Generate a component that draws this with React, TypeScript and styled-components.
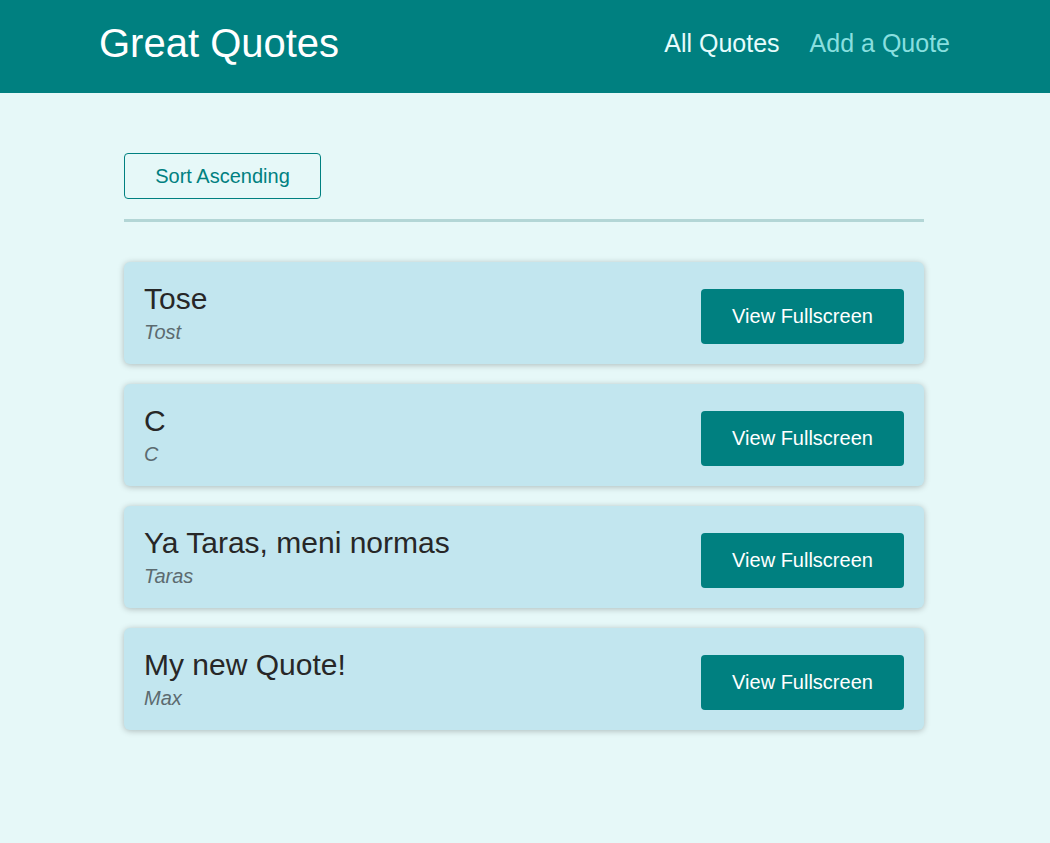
import React from "react";
import styled, { createGlobalStyle } from "styled-components";

const Global = createGlobalStyle`
  * { box-sizing: border-box; }
  html, body { margin: 0; padding: 0; }
  body {
    background: #e6f8f8;
    font-family: "Liberation Sans", Arial, sans-serif;
  }
`;

const Header = styled.header`
  height: 93px;
  background: #008080;
  display: flex;
  align-items: center;
  justify-content: space-between;
  padding: 0 100px 6px 99px;
`;

const Logo = styled.div`
  color: #ffffff;
  font-size: 40px;
`;

const NavList = styled.ul`
  display: flex;
  list-style: none;
  margin: 0;
  padding: 0;
  gap: 30px;
`;

const NavLink = styled.a<{ $active?: boolean }>`
  font-size: 25px;
  text-decoration: none;
  color: ${(p) => (p.$active ? "#e6fcfc" : "#88dfdf")};
`;

const Main = styled.main`
  width: 800px;
  margin: 60px auto 60px calc(50% - 401px);
`;

const Sorting = styled.div`
  padding-bottom: 20px;
  border-bottom: 3px solid #b3d6d6;
  margin-bottom: 40px;
`;

const OutlineButton = styled.button`
  font-family: inherit;
  font-size: 20px;
  height: 46px;
  width: 197px;
  border: 1px solid #008080;
  border-radius: 4px;
  background: transparent;
  color: #008080;
  cursor: pointer;
`;

const List = styled.ul`
  list-style: none;
  margin: 0;
  padding: 0;
  display: flex;
  flex-direction: column;
  gap: 20px;
`;

const Card = styled.li`
  background: #c2e6ef;
  border-radius: 6px;
  box-shadow: 0 1px 6px rgba(0, 0, 0, 0.25);
  display: flex;
  align-items: flex-end;
  justify-content: space-between;
  padding: 20px;
`;

const Figure = styled.figure`
  margin: 0;
`;

const Quote = styled.blockquote`
  margin: 0 0 4px;
  font-size: 30px;
  line-height: 34px;
  color: #272727;
`;

const Author = styled.figcaption`
  font-style: italic;
  font-size: 20px;
  line-height: 24px;
  color: #5c6b70;
`;

const SolidButton = styled.a`
  display: inline-flex;
  align-items: center;
  justify-content: center;
  width: 203px;
  height: 55px;
  background: #008080;
  color: #ffffff;
  font-size: 20px;
  border-radius: 4px;
  text-decoration: none;
`;

const quotes = [
  { text: "Tose", author: "Tost" },
  { text: "C", author: "C" },
  { text: "Ya Taras, meni normas", author: "Taras" },
  { text: "My new Quote!", author: "Max" },
];

export default function App() {
  return (
    <>
      <Global />
      <Header>
        <Logo>Great Quotes</Logo>
        <nav>
          <NavList>
            <li>
              <NavLink $active href="#">All Quotes</NavLink>
            </li>
            <li>
              <NavLink href="#">Add a Quote</NavLink>
            </li>
          </NavList>
        </nav>
      </Header>
      <Main>
        <Sorting>
          <OutlineButton>Sort Ascending</OutlineButton>
        </Sorting>
        <List>
          {quotes.map((q, i) => (
            <Card key={i}>
              <Figure>
                <Quote>{q.text}</Quote>
                <Author>{q.author}</Author>
              </Figure>
              <SolidButton href="#">View Fullscreen</SolidButton>
            </Card>
          ))}
        </List>
      </Main>
    </>
  );
}
